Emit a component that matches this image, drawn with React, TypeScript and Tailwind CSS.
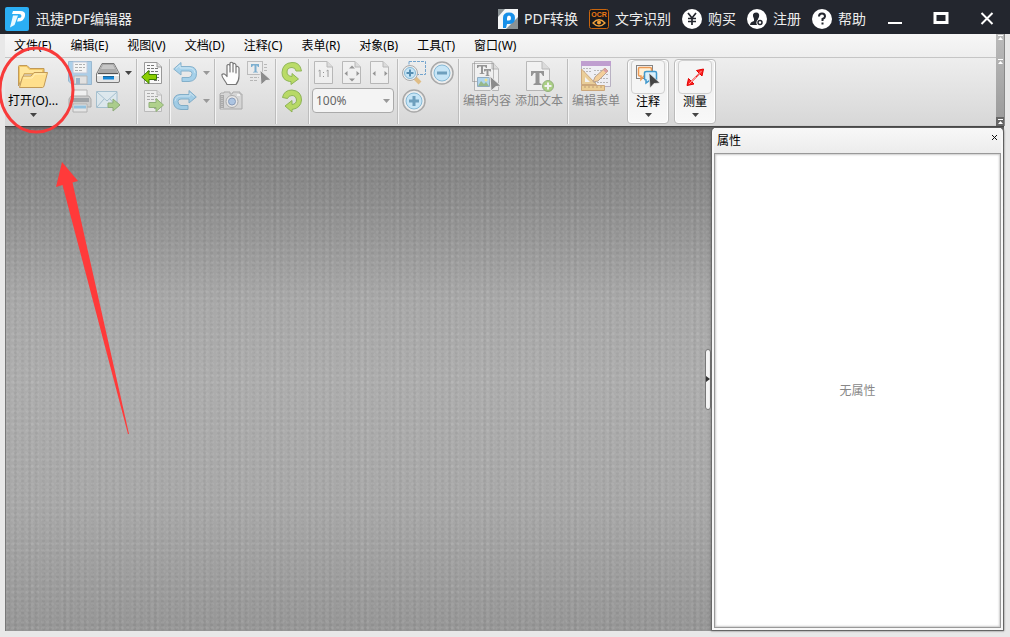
import type { ReactNode } from "react";

type IconProps = { children: ReactNode; size?: number; faded?: boolean; className?: string };

function Icon({ children, size = 24, faded = false, className = "" }: IconProps) {
  return (
    <svg
      width={size}
      height={size}
      viewBox={`0 0 ${size} ${size}`}
      fill="none"
      aria-hidden="true"
      className={`shrink-0 ${faded ? "opacity-50" : ""} ${className}`}
    >
      {children}
    </svg>
  );
}

function Tool({ label, children, className = "" }: { label: string; children: ReactNode; className?: string }) {
  return (
    <button type="button" aria-label={label} className={`flex size-6 items-center justify-center ${className}`}>
      {children}
    </button>
  );
}

function Caret({ light = false }: { light?: boolean }) {
  return (
    <svg width="7" height="4" viewBox="0 0 7 4" aria-hidden="true" className="shrink-0">
      <path d="M0 0H7L3.5 4Z" fill={light ? "#999" : "#444"} />
    </svg>
  );
}

function Group({ children, className = "" }: { children: ReactNode; className?: string }) {
  return (
    <div className="flex shrink-0 items-stretch border-r border-[#bdbdbd] shadow-[1px_0_0_#f4f4f4]">
      <div className={`content-start pt-[2px] ${className}`}>{children}</div>
    </div>
  );
}

function PageLines() {
  return (
    <>
      <path d="M3.500 1.500H16L20.500 6V22.500H3.500Z" fill="#f8f8f8" stroke="#999" />
      <path d="M16 1.500V6H20.500" fill="#ddd" stroke="#999" />
      <path d="M6 4.500H14M6 7.500H18M6 10.500H18M8 13.500H18M12 16.500H18M13 19.500H18" stroke="#777" strokeDasharray="3 1" />
    </>
  );
}

function SaveIcon() {
  return (
    <Icon faded>
      <path d="M.500 .500H23.500V23.500H4L.500 20Z" fill="#6eb5e8" stroke="#4b87b7" />
      <path d="M5 1H19V12H5Z" fill="#fff" stroke="#9ac" />
      <path d="M7 3.500H17M7 6.500H17M7 9.500H14" stroke="#777" strokeDasharray="3 1" />
      <path d="M6 15H19V23H6Z" fill="#ddd" stroke="#888" />
      <path d="M8 17H12V23H8Z" fill="#5085ad" />
    </Icon>
  );
}

function ScannerIcon() {
  return (
    <Icon>
      <path d="M6 2.500H18L23.500 13V20Q23.500 21.500 22 21.500H2Q.500 21.500 .500 20V13Z" fill="#e5e5e5" stroke="#777" />
      <path d="M6 3H18L22 12H2Z" fill="#a9a9a9" />
      <path d="M7 4H17L19 8H5Z" fill="#c6c6c6" />
      <path d="M2 12.500H22" stroke="#555" />
      <path d="M1 14.500H23" stroke="#fff" />
      <path d="M7 15.500H18V18.500H7Z" fill="#1687d7" />
      <path d="M7 15.500H18" stroke="#186496" />
    </Icon>
  );
}

function PrinterIcon() {
  return (
    <Icon faded>
      <path d="M5 1H19V8H5Z" fill="#fff" stroke="#888" />
      <path d="M3 7H21L23 10V18H1V10Z" fill="#bbb" stroke="#777" />
      <path d="M3 9H21V13H3Z" fill="#626970" />
      <path d="M5 15H19V23H5Z" fill="#eee" stroke="#888" />
      <path d="M6 18H18" stroke="#4ba6df" strokeWidth="3" />
    </Icon>
  );
}

function MailIcon() {
  return (
    <Icon faded>
      <path d="M.500 2.500H21V18.500H.500Z" fill="#d9eef9" stroke="#6ba0be" />
      <path d="M1 3L11 12L21 3M1 18L8 10M14 10L21 18" stroke="#6ba0be" />
      <path d="M12 14H17V10L24 16L17 22V18.500H12Z" fill="#78bc3b" stroke="#407b18" />
    </Icon>
  );
}

function PageArrowIcon({ back = false }: { back?: boolean }) {
  return (
    <Icon faded={!back}>
      <PageLines />
      {back ? (
        <path d="M15.500 13.500H8V9.500L.700 16L8 22.500V18.500H15.500Z" fill="#8bce00" stroke="#3a7d00" />
      ) : (
        <path d="M8 13.500H15V9.500L22.500 16L15 22.500V18.500H8Z" fill="#84c53d" stroke="#438414" />
      )}
    </Icon>
  );
}

function UndoIcon({ redo = false }: { redo?: boolean }) {
  return (
    <Icon faded className={redo ? "-scale-x-100" : ""}>
      <path
        d="M.700 8L8 1.500V5.500H17Q23.500 6 23.500 12.500Q23.500 20 16 20.500H9V16.500H16Q19 16 19 12.500Q19 10 16 10H8V14Z"
        fill="#66bbec"
        stroke="#257bb0"
      />
      <path d="M3 7.500L7 4V7H16Q21 7 22 12" stroke="#b5e4fb" />
    </Icon>
  );
}

function HandIcon() {
  return (
    <Icon>
      <path
        d="M8 23.500C6 19 2 16 3 13.500Q5 11.500 8 15.500V4.500Q9 2.500 11 4.500V11V2Q12 .500 14 2V11V3Q16 1.500 17 4V12V6Q19 4.500 20 7V15Q20 20 17 23.500Z"
        fill="#fdfdfd"
        stroke="#777"
        strokeWidth="1.2"
        strokeLinejoin="round"
      />
    </Icon>
  );
}

function Pointer({ x, y, fill = "#555" }: { x: number; y: number; fill?: string }) {
  return (
    <g transform={`translate(${x} ${y})`}>
      <path d="M0 0L11 10L6 10.500L1 15Z" fill={fill} stroke="#eee" />
    </g>
  );
}

function SelectTextIcon() {
  return (
    <Icon faded>
      <path d="M17 3.500H21M17 6.500H21M17 9.500H20M3 16.500H12M3 19.500H11" stroke="#888" strokeDasharray="3 1" />
      <path d="M.500 .500H15.500V13.500H.500Z" fill="#eee" stroke="#333" strokeDasharray="1 1" />
      <path d="M4 3H12V6H11L10 4.500H9.500V10.500L11 11V11.500H6V11L7.500 10.500V4.500H6L5 6H4Z" fill="#1275b5" />
      <Pointer x={13} y={9} fill="#333" />
    </Icon>
  );
}

function CameraIcon() {
  return (
    <Icon faded>
      <path d="M2 4H5V3H11V5H13L14 3H21V5H23V20H1V5Z" fill="#ccc" stroke="#777" />
      <path d="M1 6H5V19H1Z" fill="#777" />
      <path d="M3 5V20" stroke="#ddd" strokeDasharray="1 1" />
      <circle cx="13" cy="12.500" r="6" fill="#eee" stroke="#777" />
      <circle cx="13" cy="12.500" r="3.500" fill="#7babe4" stroke="#345a96" />
      <path d="M18 6H21" stroke="#fff" strokeWidth="2" />
    </Icon>
  );
}

function RotateIcon({ down = false }: { down?: boolean }) {
  return (
    <Icon className="opacity-75">
      {down ? (
        <path
          d="M2.500 8.500Q4 1 12 1Q21.500 2 21.500 11Q21 19 12 20.500V23L5 17L12 11.500V15.500Q16.500 15 16.500 11Q16 6.500 12 6.500Q8.500 6.500 7.500 9.500Z"
          fill="#abd73d"
          stroke="#72a529"
        />
      ) : (
        <path
          d="M21.500 10Q20 1 12 1.500Q2.500 2 2 11.500Q2 19 9.500 20.500H11V23.500L18.500 18L12 12.500V15.500Q7 15 7 11Q7 6.500 12 6.500Q15.500 6.500 16 10Z"
          fill="#abd73d"
          stroke="#72a529"
        />
      )}
    </Icon>
  );
}

function FitPageIcon({ mode }: { mode: "actual" | "page" | "width" }) {
  return (
    <Icon faded>
      <path d="M2.500 .500H15L20.500 6V22.500H2.500Z" fill="#f7f7f7" stroke="#888" />
      <path d="M15 .500V6H20.500" fill="#ccc" stroke="#888" />
      {mode === "actual" && <path d="M6.500 10L8 9V16M14.500 10L16 9V16" stroke="#555" />}
      {mode === "actual" && <path d="M11 11H12V12H11ZM11 15H12V16H11Z" fill="#444" />}
      {mode !== "actual" && <path d="M7.500 10V15L4.500 12.500ZM16.500 10V15L19.500 12.500Z" fill="#444" />}
      {mode === "page" && <path d="M9 7.500H15L12 4.500ZM9 17.500H15L12 20.500Z" fill="#444" />}
    </Icon>
  );
}

function ZoomGlyph({ plus = false }: { plus?: boolean }) {
  return (
    <Icon>
      <circle cx="12" cy="12" r="11" fill="#ededed" stroke="#a9a9a9" strokeWidth="1.500" />
      <circle cx="12" cy="12" r="8" fill="#c7e5f6" stroke="#86b9d6" />
      <path d={plus ? "M7 12H17M12 7V17" : "M7 12H17"} stroke="#6e9fbd" strokeWidth="3" />
    </Icon>
  );
}

function MarqueeZoomIcon() {
  return (
    <Icon>
      <path d="M7 .500H23.500V13.500H14M7 .500V5" stroke="#75a5ce" strokeDasharray="3 1" />
      <path d="M13 17L18 22" stroke="#dfbd87" strokeWidth="4" />
      <circle cx="8" cy="12" r="7.500" fill="#eee" stroke="#aaa" />
      <circle cx="8" cy="12" r="5.500" fill="#c7e5f6" stroke="#86b9d6" />
      <path d="M4.500 12H11.500M8 8.500V15.500" stroke="#568eb2" strokeWidth="2" />
    </Icon>
  );
}

function OpenIcon() {
  return (
    <Icon size={32}>
      <path d="M1.500 5.500Q1.500 4.500 2.500 4.500H10L13 7.500H27V13H7L1.500 25Z" fill="#f2c764" stroke="#c29a57" />
      <path d="M3 6H9.500L12.500 9H25V12H7L3 22Z" fill="#ffe59b" />
      <path d="M2.500 26.500L5.500 16Q6 15 7 15H14L17 11.500H30.500L27 25Q26.500 26.500 25.500 26.500Z" fill="#ffdf8d" stroke="#c29a57" />
      <path d="M6.500 17H15L18 13H28" stroke="#fff0b8" />
    </Icon>
  );
}

function EditContentIcon() {
  return (
    <Icon size={32} faded>
      <path d="M3.500 .500H21L27.500 8V29.500H3.500Z" fill="#f8f8f8" stroke="#888" />
      <path d="M21 .500V8H27.500" fill="#ccc" stroke="#888" />
      <path d="M1.500 2.500H22.500V20.500H1.500Z" stroke="#222" strokeDasharray="1 1" />
      <path d="M6 4H16V7H15L14 5.500H12V12L13.500 12.500V13H8.500V12.500L10 12V5.500H8L7 7H6Z" fill="#444" />
      <path d="M13 8H20V10.500H19L18 9.500H17.500V14L18.500 14.500V15H14.500V14.500L15.500 14V9.500H15L14 10.500H13Z" fill="#444" />
      <path d="M6.500 16.500H18.500V25.500H6.500Z" fill="#79c4f5" stroke="#3c739c" />
      <path d="M7 25L10 20L13 23L15 21L18 25Z" fill="#4b8c34" />
      <circle cx="15" cy="19" r="1.500" fill="#f6da31" />
      <Pointer x={19} y={15} fill="#333" />
    </Icon>
  );
}

function AddTextIcon() {
  return (
    <Icon size={32} faded>
      <path d="M3.500 .500H19L26.500 8V29.500H3.500Z" fill="#f8f8f8" stroke="#888" />
      <path d="M19 .500V8H26.500" fill="#ccc" stroke="#888" />
      <path d="M8 10H21V15H20L18 12H16.500V22L18.500 23V24H10.500V23L12.500 22V12H11L9 15H8Z" fill="#444" />
      <circle cx="25" cy="25" r="5.500" fill="#73bb28" stroke="#477f1c" />
      <path d="M21.500 25H28.500M25 21.500V28.500" stroke="white" strokeWidth="2" />
    </Icon>
  );
}

function EditFormIcon() {
  return (
    <Icon size={32} faded>
      <path d="M1.500 .500H30.500V25.500H1.500Z" fill="#f5f5ff" stroke="#8b7c9f" />
      <path d="M1 0H31V5H1Z" fill="#9454b5" />
      <path d="M3 7.500H12M3 10.500H12M14 9.500H29M14 13.500H29M14 17.500H29M14 21.500H29" stroke="#888" strokeDasharray="2 1" />
      <path d="M1.500 8L16.500 23.500H1.500Z" fill="#edb64e" stroke="#b56c16" />
      <path d="M5 16L10 21H5Z" fill="#fff" />
      <path d="M1.500 24.500H24.500V29.500H1.500Z" fill="#f2b947" stroke="#b56c16" />
      <path d="M5 25V27M9 25V27M13 25V27M17 25V27M21 25V27" stroke="#9b5909" />
      <path d="M13 21L15 16L25 7L28 10L18 20Z" fill="#ffb64e" stroke="#8d5e37" />
      <path d="M25 7L28 10L26 12L23 9Z" fill="#d0555a" />
    </Icon>
  );
}

function CommentIcon() {
  return (
    <Icon size={32}>
      <path d="M4.500 4.500H20.500V17.500H4.500Z" stroke="#111" strokeDasharray="1 1" />
      <path d="M7.500 6.500H18Q19.500 6.500 19.500 8V15H12L9 18.500V15H7.500Q6.500 15 6.500 14V8Q6.500 6.500 7.500 6.500Z" fill="#fff0d6" stroke="#ed9a55" strokeWidth="1.500" />
      <path d="M14.500 10.500H23Q24.500 10.500 24.500 12V18.500H19L14 22V19Q12.500 19 12.500 17.500V12Q12.500 10.500 14.500 10.500Z" fill="#daf0fc" stroke="#4299cc" strokeWidth="1.500" />
      <path d="M17 12L28 22L22 22.500L18 27Z" fill="#444" stroke="#eee" strokeWidth=".700" />
    </Icon>
  );
}

function MeasureIcon() {
  return (
    <Icon size={32}>
      <path d="M10 23L23 10" stroke="#ed1c1c" strokeWidth="1.500" />
      <path d="M8 24.500L9.500 17.500L15 23ZM24.500 8L17.500 9.500L23 15Z" fill="#ff2525" stroke="#e20000" />
      <path d="M10 23L17 16M22.500 10L18 14.500" stroke="#ff9c9c" />
    </Icon>
  );
}

const menus = ["文件(F)", "编辑(E)", "视图(V)", "文档(D)", "注释(C)", "表单(R)", "对象(B)", "工具(T)", "窗口(W)"];

function TitleLink({ label, children }: { label: string; children: ReactNode }) {
  return (
    <a href="#" className="flex items-center gap-1.5 whitespace-nowrap text-sm text-[#ededed]">
      {children}
      {label}
    </a>
  );
}

function TitleBar() {
  return (
    <header className="flex h-[34px] shrink-0 items-center bg-[#23262e] pl-[5px] pt-1">
      <svg width="24" height="24" viewBox="0 0 24 24" aria-hidden="true" className="shrink-0">
        <rect width="24" height="24" rx="2" fill="#2baef4" />
        <path d="M8 4H15Q21 4 20 9Q19 14.500 13 14.500L12 14.500L13 11H14Q16.500 11 16.500 9Q16.500 7 14 7H7Z" fill="white" />
        <path d="M8 8.500H13L9.500 18L5 20.500Z" fill="#e9f8ff" />
      </svg>
      <h1 className="ml-[7px] whitespace-nowrap text-sm text-[#ededed]">迅捷PDF编辑器</h1>
      <nav aria-label="快捷入口" className="ml-auto mr-[6px] flex items-center gap-[11px]">
        <TitleLink label="PDF转换">
          <Icon size={20}>
            <rect width="20" height="20" fill="#f5f7f8" />
            <path d="M0 0H7L0 8ZM20 8V20H8Z" fill="#8a9295" />
            <path d="M5 19V9Q5 3.500 11 3.500Q17 3.500 17 9Q17 15 11 15H9L8 19Z" fill="#178fe8" />
            <path d="M9 11.500V9Q9 6.500 11 6.500Q13 6.500 13 9Q13 11.500 11 11.500Z" fill="#fff" />
          </Icon>
        </TitleLink>
        <TitleLink label="文字识别">
          <Icon size={20}>
            <rect x=".500" y=".500" width="19" height="19" rx="2" fill="#16181c" stroke="#c9650d" />
            <text x="10" y="8" textAnchor="middle" fontFamily="Liberation Sans" fontWeight="700" fontSize="7" fill="#eb7915">OCR</text>
            <path d="M4 14Q10 7.500 16 14Q10 20 4 14Z" stroke="#f1a23c" strokeWidth="1.300" />
            <circle cx="10" cy="13.500" r="2" fill="#f1a23c" />
          </Icon>
        </TitleLink>
        <TitleLink label="购买">
          <Icon size={20}>
            <circle cx="10" cy="10" r="10" fill="white" />
            <path d="M6 4L10 9L14 4M10 9V16M6 9.500H14M6 12.500H14" stroke="#23262e" strokeWidth="1.700" />
          </Icon>
        </TitleLink>
        <TitleLink label="注册">
          <Icon size={20}>
            <circle cx="10" cy="10" r="10" fill="white" />
            <path d="M9 3.500Q13 3.500 12 8L11 10V12Q9 13 10 16H3Q3 13 7 12V10Q4 4 9 3.500Z" fill="#23262e" />
            <circle cx="13" cy="13.500" r="3.500" fill="white" />
            <circle cx="13" cy="13.500" r="2" fill="white" stroke="#23262e" strokeWidth="1.500" />
          </Icon>
        </TitleLink>
        <TitleLink label="帮助">
          <Icon size={20}>
            <circle cx="10" cy="10" r="10" fill="white" />
            <path d="M7 7.500Q7 4.500 10 4.500Q13 4.500 13 7.500Q13 9 10.500 10V12M10.500 13.500V15.500" stroke="#23262e" strokeWidth="2" />
          </Icon>
        </TitleLink>
      </nav>
      <div className="flex shrink-0 items-center">
        {[
          ["最小化", "M5 16H19", 2],
          ["最大化", "M6 6.500H18V15.500H6Z", 3],
          ["关闭", "M6.500 6L17.500 17M17.500 6L6.500 17", 2],
        ].map(([label, d, width]) => (
          <button key={label} type="button" aria-label={String(label)} className="flex w-[46px] items-center justify-center">
            <Icon>
              <path d={String(d)} stroke="white" strokeWidth={width} />
            </Icon>
          </button>
        ))}
      </div>
    </header>
  );
}

function LargeTool({ label, children, active = false }: { label: string; children: ReactNode; active?: boolean }) {
  return active ? (
    <button
      type="button"
      className="flex w-[42px] flex-col items-center rounded-sm border border-[#bbb] bg-gradient-to-b from-[#eee] to-[#f8f8f8] text-black shadow-[inset_0_0_0_1px_white]"
    >
      <span className="flex size-[34px] items-center justify-center rounded-sm border border-[#cfcfcf] bg-[#f5f5f5]">{children}</span>
      <span className="leading-4">{label}</span>
      <span className="pt-[3px]"><Caret /></span>
    </button>
  ) : (
    <button type="button" className="flex w-[52px] flex-col items-center whitespace-nowrap text-[#858585]">
      {children}
      <span className="leading-4">{label}</span>
    </button>
  );
}

function Toolbar() {
  return (
    <div className="flex h-[68px] bg-gradient-to-b from-[#eee] to-[#d7d7d7] pb-[2px] pt-px" role="toolbar" aria-label="工具栏">
      <Group className="flex gap-[7px]">
        <button type="button" className="flex w-14 flex-col items-center whitespace-nowrap">
          <OpenIcon />
          <span className="leading-4">打开(O)...</span>
          <span className="pt-1"><Caret /></span>
        </button>
        <div className="grid w-[68px] grid-cols-[24px_24px_8px] content-start gap-1">
          <Tool label="保存"><SaveIcon /></Tool>
          <Tool label="扫描"><ScannerIcon /></Tool>
          <button type="button" aria-label="扫描选项" className="flex items-center justify-center"><Caret /></button>
          <Tool label="打印"><PrinterIcon /></Tool>
          <Tool label="发送邮件"><MailIcon /></Tool>
        </div>
      </Group>
      <Group className="grid w-8 justify-center gap-1">
        <Tool label="上一视图"><PageArrowIcon back /></Tool>
        <Tool label="下一视图"><PageArrowIcon /></Tool>
      </Group>
      <Group className="grid w-11 grid-cols-[24px_10px] justify-center gap-1">
        <Tool label="撤销"><UndoIcon /></Tool>
        <button type="button" aria-label="撤销历史" className="flex items-center justify-center"><Caret light /></button>
        <Tool label="重做"><UndoIcon redo /></Tool>
        <button type="button" aria-label="重做历史" className="flex items-center justify-center"><Caret light /></button>
      </Group>
      <Group className="grid w-[60px] grid-cols-[24px_24px] justify-center gap-1">
        <Tool label="手形工具"><HandIcon /></Tool>
        <Tool label="选择文本"><SelectTextIcon /></Tool>
        <Tool label="快照"><CameraIcon /></Tool>
      </Group>
      <Group className="grid w-8 justify-center gap-1">
        <Tool label="逆时针旋转"><RotateIcon /></Tool>
        <Tool label="顺时针旋转"><RotateIcon down /></Tool>
      </Group>
      <Group className="flex w-[88px] flex-col px-[3px]">
        <div className="flex gap-1">
          <Tool label="实际大小"><FitPageIcon mode="actual" /></Tool>
          <Tool label="适合页面"><FitPageIcon mode="page" /></Tool>
          <Tool label="适合宽度"><FitPageIcon mode="width" /></Tool>
        </div>
        <div className="relative mt-[3px] flex items-center">
          <select
            aria-label="缩放比例"
            defaultValue="100"
            className="h-[25px] w-full appearance-none rounded-sm border border-[#aaa] bg-[#f4f4f4] pl-[3px] text-xs text-[#666]"
          >
            <option value="50">50%</option>
            <option value="100">100%</option>
            <option value="200">200%</option>
          </select>
          <span className="pointer-events-none absolute right-1 flex"><Caret light /></span>
        </div>
      </Group>
      <Group className="grid w-[60px] grid-cols-[24px_24px] justify-center gap-1">
        <Tool label="区域放大"><MarqueeZoomIcon /></Tool>
        <Tool label="缩小"><ZoomGlyph /></Tool>
        <Tool label="放大"><ZoomGlyph plus /></Tool>
      </Group>
      <Group className="flex w-[108px] justify-center">
        <LargeTool label="编辑内容"><EditContentIcon /></LargeTool>
        <LargeTool label="添加文本"><AddTextIcon /></LargeTool>
      </Group>
      <div className="flex w-14 shrink-0 justify-center pt-[2px]">
        <LargeTool label="编辑表单"><EditFormIcon /></LargeTool>
      </div>
      <div className="ml-[3px] flex gap-[5px]">
        <LargeTool label="注释" active><CommentIcon /></LargeTool>
        <LargeTool label="测量" active><MeasureIcon /></LargeTool>
      </div>
    </div>
  );
}

function Chevron() {
  return (
    <svg width="5" height="5" viewBox="0 0 5 5" aria-hidden="true">
      <path d="M0 0H5V1H0ZM2.500 2L5 5H0Z" fill="white" />
    </svg>
  );
}

export default function App() {
  return (
    <div className="relative flex h-screen flex-col overflow-hidden bg-[#e8e8e8] font-['Noto_Sans','Noto_Sans_CJK_SC',sans-serif] text-xs text-black">
      <TitleBar />
      <div className="flex shrink-0 pl-[5px] pr-[5px]">
        <div className="min-w-0 flex-1">
          <nav aria-label="主菜单" className="flex h-6 items-center gap-[19px] border-b border-[#c5c5c5] bg-gradient-to-b from-[#f7f7f7] to-[#eee] pl-[9px]">
            {menus.map((menu) => (
              <button key={menu} type="button" className="whitespace-nowrap">{menu}</button>
            ))}
          </nav>
          <Toolbar />
        </div>
        <div className="flex w-[9px] flex-col items-center border-r border-[#888] bg-gradient-to-b from-[#bbb] to-[#999] pt-px">
          <div className="h-6"><Chevron /></div>
          <Chevron />
          <div className="mt-auto flex w-full justify-center bg-[#666] py-[2px]"><Chevron /></div>
        </div>
      </div>
      <main className="mb-[6px] ml-[5px] mr-[6px] flex min-h-0 flex-1 border-t border-[#444] bg-[radial-gradient(circle,#ffffff12_1px,transparent_2px),radial-gradient(circle,#0000000d_1px,transparent_2px),radial-gradient(circle,#ffffff0d_1px,transparent_2px),linear-gradient(#7c7c7c,#8c8c8c_14%,#a8a8a8_34%,#adadad_50%,#a8a8a8_75%,#969696)] bg-[size:5px_6px,7px_4px,6px_7px,100%_100%] shadow-[inset_1px_0_0_#777,inset_0_4px_4px_-3px_#555]">
        <section aria-label="文档区域" className="flex min-w-0 flex-1 items-center justify-end">
          <button
            type="button"
            aria-label="折叠属性面板"
            className="mr-px flex h-[61px] w-[6px] items-center justify-center rounded-sm border border-[#777] bg-[#f4f4f4]"
          >
            <svg width="4" height="6" viewBox="0 0 4 6" aria-hidden="true" className="shrink-0"><path d="M0 0L4 3L0 6Z" fill="#333" /></svg>
          </button>
        </section>
        <aside className="mb-px mr-px mt-px flex w-[291px] shrink-0 flex-col rounded-t-sm bg-[#f8f8f8] px-[2px] pb-[2px] shadow-[0_0_2px_1px_#555]">
          <div className="flex h-[25px] items-center justify-between bg-gradient-to-b from-[#f8f8f8] to-[#ececec] pl-[3px] pr-px">
            <h2>属性</h2>
            <button type="button" aria-label="关闭属性" className="mb-1.5 flex size-3 items-center justify-center">
              <svg width="7" height="7" viewBox="0 0 7 7" aria-hidden="true"><path d="M1 1L6 6M6 1L1 6" stroke="#111" /></svg>
            </button>
          </div>
          <div className="flex flex-1 items-center justify-center border border-[#999] bg-white text-[#888] shadow-[inset_0_0_2px_1px_#ccc]">
            无属性
          </div>
        </aside>
      </main>
      <svg
        width="140"
        height="440"
        viewBox="0 0 140 440"
        fill="none"
        aria-hidden="true"
        className="pointer-events-none absolute left-0 top-0"
      >
        <ellipse cx="36.500" cy="90" rx="36.500" ry="42" stroke="#f83a3a" strokeWidth="3" />
        <path d="M62 162L78 181L72.500 182.500L129 434H128L62.500 185L56 187Z" fill="#ff3a3a" />
      </svg>
    </div>
  );
}
